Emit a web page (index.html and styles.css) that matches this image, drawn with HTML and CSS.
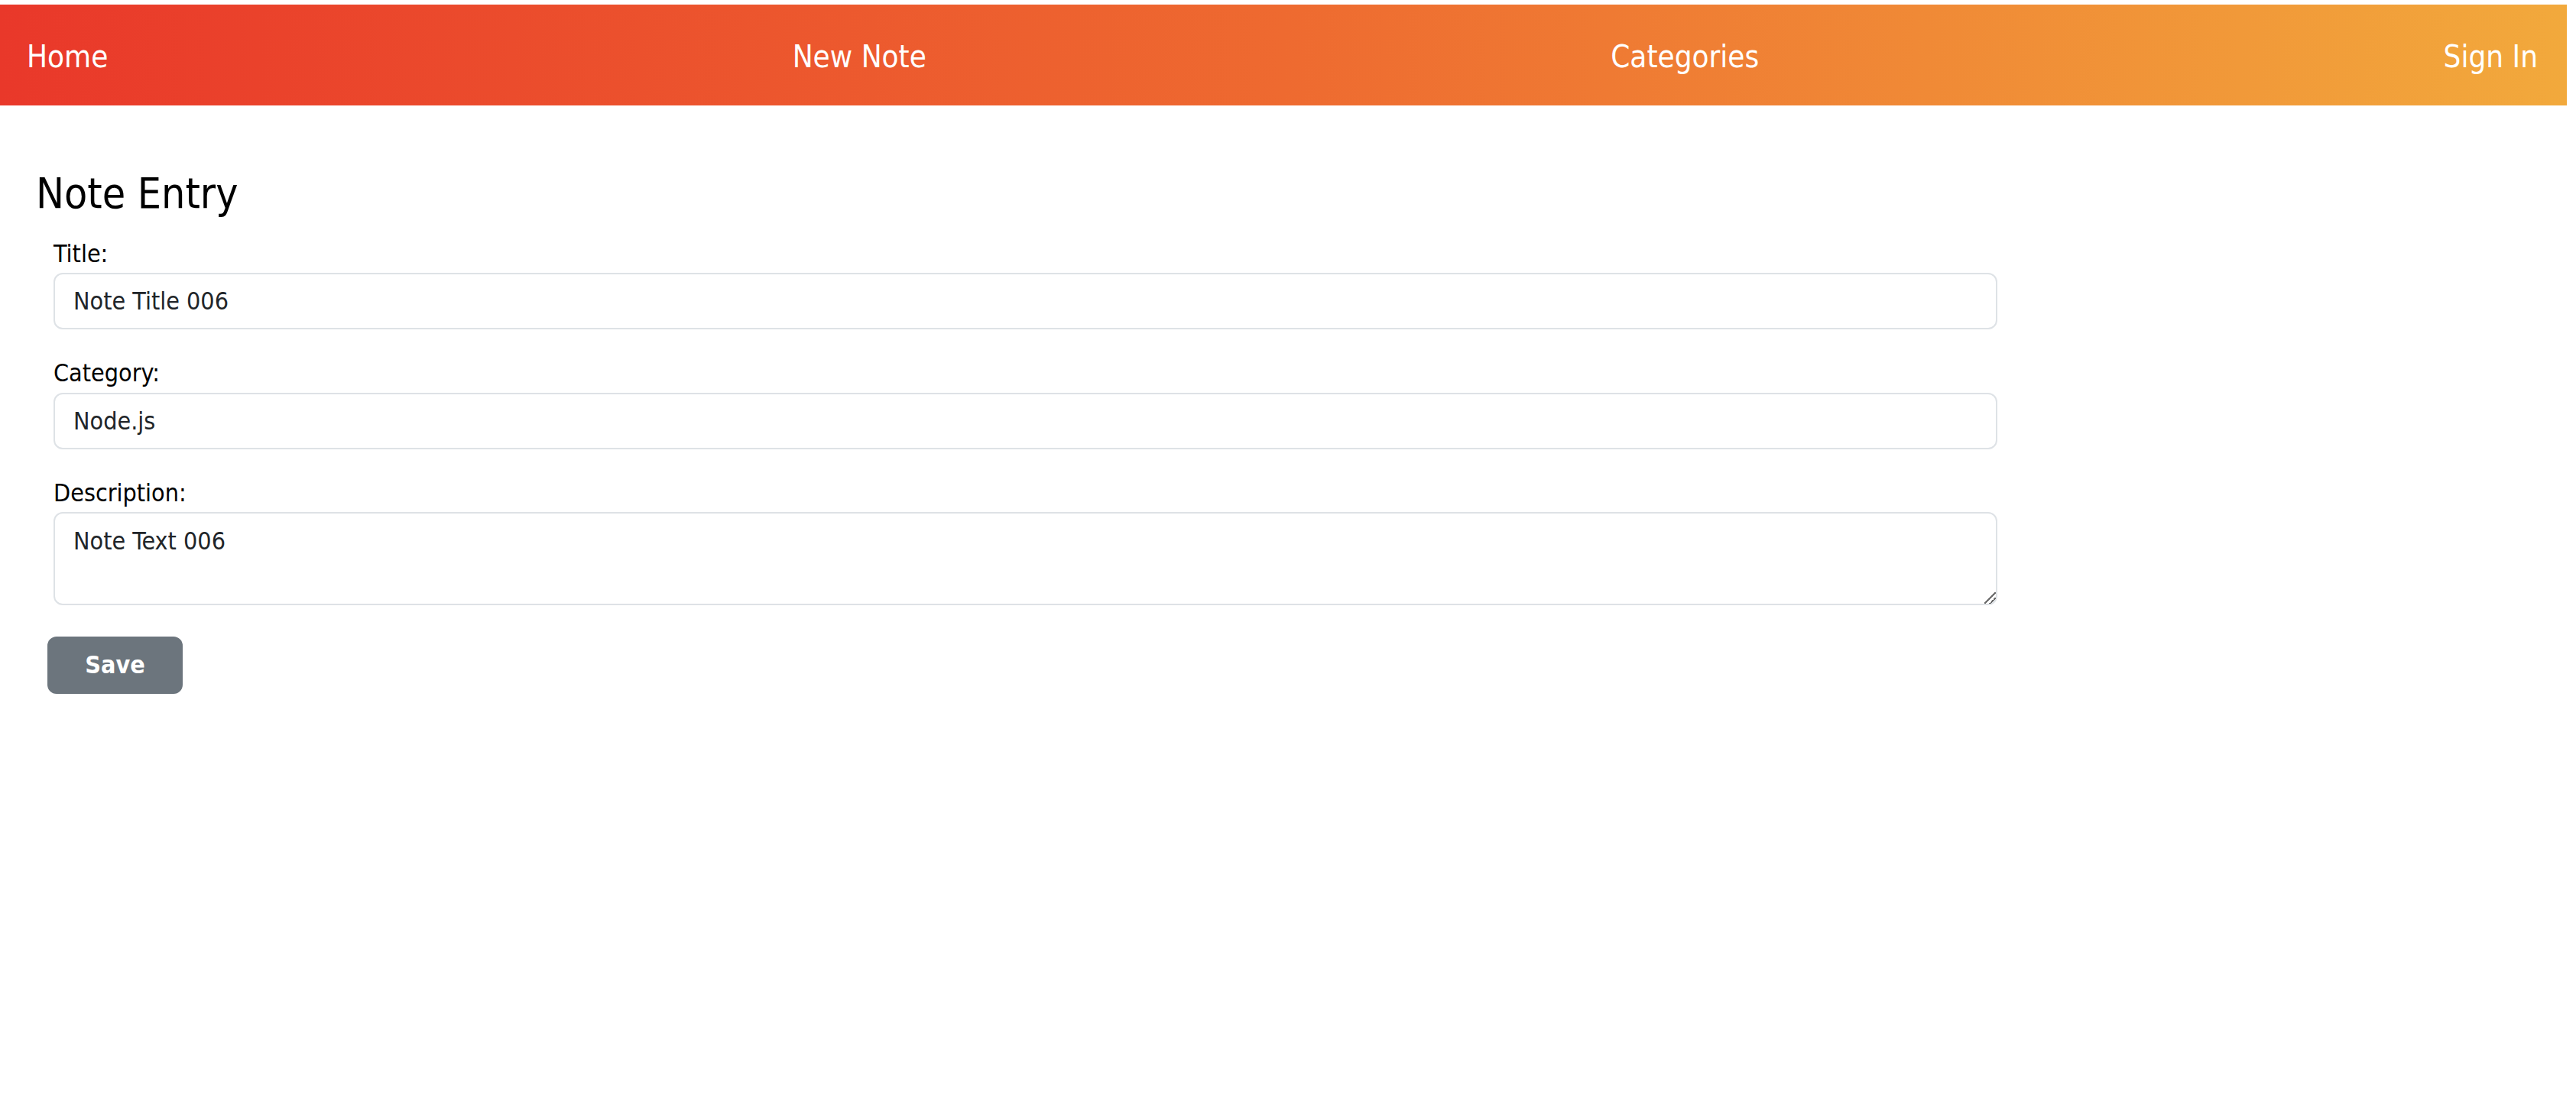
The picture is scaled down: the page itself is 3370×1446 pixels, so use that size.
FILE: index.html
```html
<!DOCTYPE html>
<html lang="en">
<head>
<meta charset="utf-8">
<title>Note Entry</title>
<link rel="stylesheet" href="styles.css">
</head>
<body>
<nav class="topnav">
  <a class="nav-link" href="#">Home</a>
  <a class="nav-link" href="#">New Note</a>
  <a class="nav-link" href="#">Categories</a>
  <a class="nav-link" href="#">Sign In</a>
</nav>
<main class="page">
  <h2 class="page-title">Note Entry</h2>
  <form class="note-form">
    <div class="field">
      <label class="field-label" for="title">Title:</label>
      <input class="control" id="title" type="text" value="Note Title 006">
    </div>
    <div class="field">
      <label class="field-label" for="category">Category:</label>
      <input class="control" id="category" type="text" value="Node.js">
    </div>
    <div class="field field-last">
      <label class="field-label" for="description">Description:</label>
      <textarea class="control control-area" id="description">Note Text 006</textarea>
    </div>
    <button class="btn-save" type="button">Save</button>
  </form>
</main>
</body>
</html>
```

FILE: styles.css
```css
html, body {
  margin: 0;
  padding: 0;
  background: #ffffff;
}

body {
  font-family: "DejaVu Sans Condensed", "DejaVu Sans", sans-serif;
  font-stretch: condensed;
  color: #000000;
}

.topnav {
  box-sizing: border-box;
  width: 3358px;
  height: 132px;
  margin-top: 6px;
  padding: 3px 38px 0 35px;
  display: flex;
  align-items: center;
  justify-content: space-between;
  background: linear-gradient(to right, #e9382a 0%, #ee6a30 50%, #f2a93c 100%);
}

.nav-link {
  color: #ffffff;
  text-decoration: none;
  font-size: 40px;
  line-height: 1.2;
}

.page {
  padding-left: 47px;
}

.page-title {
  margin: 82px 0 27px;
  font-size: 55px;
  line-height: 1.2;
  font-weight: normal;
}

.note-form {
  padding-left: 15px;
}

.field {
  padding-left: 8px;
  margin-bottom: 38px;
}

.field-last {
  margin-bottom: 41px;
}

.field-label {
  display: block;
  font-size: 32px;
  line-height: 1.2;
  margin-bottom: 6px;
}

.control {
  display: block;
  box-sizing: border-box;
  width: 2543px;
  height: 74px;
  margin: 0;
  padding: 0 24px;
  border: 2px solid #dee2e6;
  border-radius: 12px;
  background: #ffffff;
  color: #212529;
  font-family: "DejaVu Sans Condensed", "DejaVu Sans", sans-serif;
  font-stretch: condensed;
  font-size: 32px;
  line-height: 1.5;
  outline: none;
}

.control-area {
  height: 122px;
  padding: 12px 24px;
}

.control-area::-webkit-scrollbar {
  width: 16px;
  height: 16px;
}

.control-area::-webkit-resizer {
  background: linear-gradient(135deg,
    transparent 0 46%,
    #6b6b6b 46% 54%,
    transparent 54% 70%,
    #6b6b6b 70% 78%,
    transparent 78% 100%);
}

.btn-save {
  display: block;
  box-sizing: border-box;
  width: 177px;
  height: 75px;
  margin: 0;
  padding: 0;
  border: none;
  border-radius: 12px;
  background: #6c757d;
  color: #ffffff;
  font-family: "DejaVu Sans Condensed", "DejaVu Sans", sans-serif;
  font-stretch: condensed;
  font-size: 32px;
  font-weight: bold;
  line-height: 1.2;
}
```
